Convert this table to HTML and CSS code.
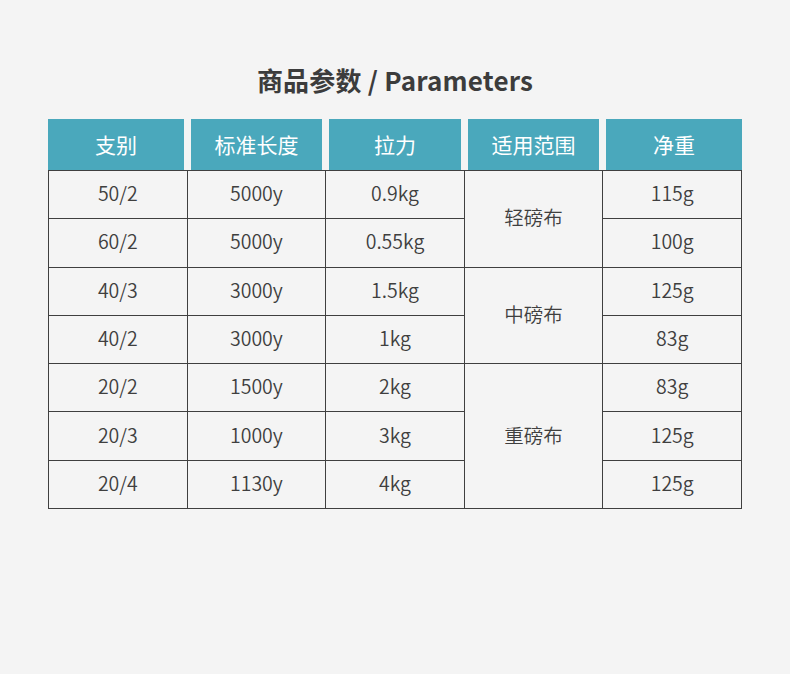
FILE: index.html
```html
<!DOCTYPE html>
<html lang="zh-CN">
<head>
<meta charset="utf-8">
<title>商品参数 / Parameters</title>
<link rel="stylesheet" href="styles.css">
</head>
<body>
<div class="page">
  <h1 class="title">商品参数 / Parameters</h1>
  <div class="heads">
    <div class="head">支别</div>
    <div class="head">标准长度</div>
    <div class="head">拉力</div>
    <div class="head">适用范围</div>
    <div class="head">净重</div>
  </div>
  <table class="params">
    <tbody>
      <tr><td>50/2</td><td>5000y</td><td>0.9kg</td><td rowspan="2">轻磅布</td><td>115g</td></tr>
      <tr><td>60/2</td><td>5000y</td><td>0.55kg</td><td>100g</td></tr>
      <tr><td>40/3</td><td>3000y</td><td>1.5kg</td><td rowspan="2">中磅布</td><td>125g</td></tr>
      <tr><td>40/2</td><td>3000y</td><td>1kg</td><td>83g</td></tr>
      <tr><td>20/2</td><td>1500y</td><td>2kg</td><td rowspan="3">重磅布</td><td>83g</td></tr>
      <tr><td>20/3</td><td>1000y</td><td>3kg</td><td>125g</td></tr>
      <tr><td>20/4</td><td>1130y</td><td>4kg</td><td>125g</td></tr>
    </tbody>
  </table>
</div>
</body>
</html>
```
FILE: styles.css
```css
html, body {
  margin: 0;
  padding: 0;
  background: #f4f4f4;
}
body {
  font-family: "Noto Sans CJK SC", "Noto Sans", sans-serif;
  color: #444;
  width: 790px;
  height: 674px;
  overflow: hidden;
}
.page {
  padding: 61px 48px 0 48px;
}
.title {
  margin: 0;
  height: 38px;
  line-height: 38px;
  text-align: center;
  font-size: 26px;
  font-weight: 700;
  color: #3c3c3c;
  letter-spacing: 0.2px;
}
.heads {
  margin-top: 20px;
  display: grid;
  grid-template-columns: 136px 131px 132px 131px 136px;
  column-gap: 7px;
  width: 694px;
}
.head {
  background: #4aa8bc;
  color: #ffffff;
  height: 51px;
  line-height: 51px;
  text-align: center;
  font-size: 21px;
  font-weight: 400;
}
.params {
  border-collapse: collapse;
  width: 694px;
  table-layout: fixed;
}
.params td {
  border: 1px solid #3f3f3f;
  text-align: center;
  vertical-align: middle;
  font-size: 19.5px;
  font-weight: 350;
  color: #3f3f3f;
  height: 44.3px;
  padding: 0 0 3px 0;
  line-height: 24px;
}
```
